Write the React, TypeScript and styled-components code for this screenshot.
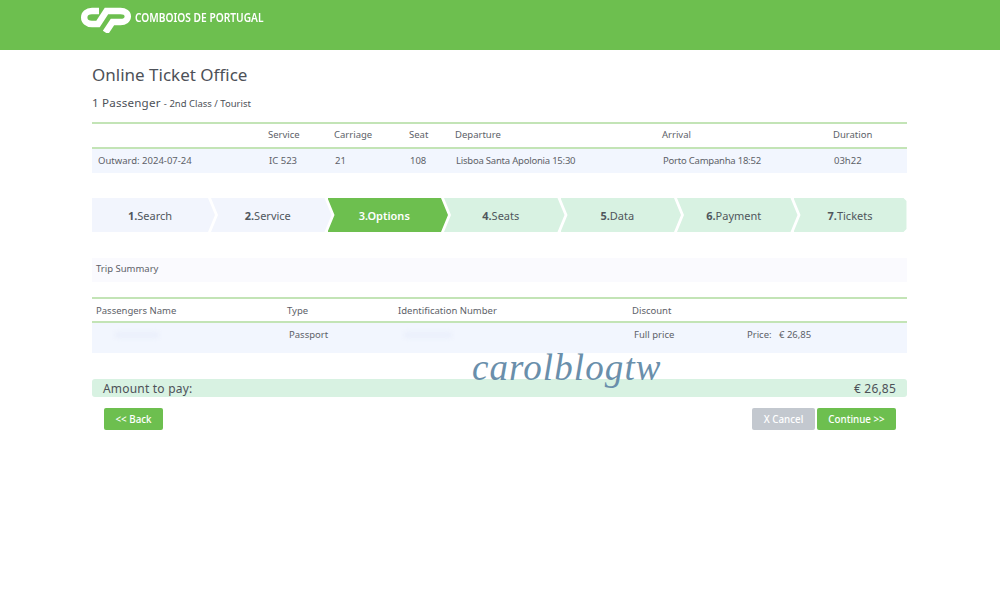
import React from 'react';
import styled, { createGlobalStyle } from 'styled-components';

const GlobalStyle = createGlobalStyle`
  html, body {
    margin: 0;
    padding: 0;
    background: #fff;
  }

  body {
    font-family: "Noto Sans", "Open Sans", sans-serif;
    color: #4d5158;
  }
`;

const Page = styled.div`
  position: relative;
  width: 1000px;
  height: 600px;
  overflow: hidden;
`;

const Header = styled.header`
  height: 50px;
  background: #6dbf4f;
  padding: 6px 0 0 81px;
  box-sizing: border-box;
  display: flex;
  align-items: flex-start;
  gap: 4px;
`;

const BrandName = styled.span`
  margin-top: 3px;
  font-size: 12.5px;
  line-height: 18px;
  font-weight: 600;
  color: #fff;
  transform: scaleX(0.816);
  transform-origin: left center;
  white-space: nowrap;
`;

const Main = styled.main`
  margin: 0 93px 0 92px;
`;

const Title = styled.h1`
  margin: 13px 0 0;
  font-size: 17px;
  line-height: 24px;
  font-weight: 400;
  color: #4d5158;
`;

const Subtitle = styled.div`
  margin-top: 6px;
  height: 20px;
  font-size: 11.6px;
  line-height: 20px;
  letter-spacing: 0.2px;
  color: #4d5158;

  small {
    font-size: 9.5px;
    letter-spacing: 0;
  }
`;

const Grid = styled.div<{ $cols: string }>`
  display: grid;
  grid-template-columns: ${(p) => p.$cols};
  align-items: center;
`;

const HeadRow = styled(Grid)<{ $h: number; $lift?: number }>`
  height: ${(p) => p.$h}px;
  box-sizing: border-box;
  padding-bottom: ${(p) => p.$lift ?? 0}px;
  border-top: 2px solid #c3e4b6;
  border-bottom: 2px solid #c3e4b6;
  font-size: 9.5px;
  color: #5d6168;
`;

const BodyRow = styled(Grid)<{ $h: number; $lift?: number }>`
  height: ${(p) => p.$h}px;
  box-sizing: border-box;
  padding-bottom: ${(p) => p.$lift ?? 0}px;
  background: #f2f6fe;
  font-size: 9.5px;
  color: #5d6168;
`;

const Cell = styled.span<{ $pad?: number; $tight?: boolean }>`
  padding-left: ${(p) => p.$pad ?? 0}px;
  letter-spacing: ${(p) => (p.$tight ? '-0.22px' : '0')};
  white-space: nowrap;
`;

const TopTable = styled.section`
  margin-top: 9px;
`;

const Steps = styled.nav`
  margin-top: 25px;
  display: flex;
  height: 34px;
`;

type StepState = 'done' | 'active' | 'todo';

const stepBg: Record<StepState, string> = {
  done: '#f2f5fd',
  active: '#6dbf4f',
  todo: '#d8f2e2'
};

const firstClip = 'polygon(0 0, calc(100% - 7px) 0, 100% 50%, calc(100% - 7px) 100%, 0 100%)';
const middleClip = 'polygon(0 0, calc(100% - 7px) 0, 100% 50%, calc(100% - 7px) 100%, 0 100%, 7px 50%)';
const lastClip = 'polygon(0 0, calc(100% - 3px) 0, 100% 3px, 100% calc(100% - 3px), calc(100% - 3px) 100%, 0 100%, 7px 50%)';

const stepWidth = (first: boolean, last: boolean) => (first ? 123 : last ? 113 : 120.5);

const Step = styled.div<{ $state: StepState; $first: boolean; $last: boolean }>`
  flex: 0 0 ${(p) => stepWidth(p.$first, p.$last)}px;
  height: 34px;
  box-sizing: border-box;
  padding-right: ${(p) => (p.$last ? 0 : 7)}px;
  margin-right: ${(p) => (p.$last ? 0 : -4)}px;
  display: flex;
  align-items: center;
  justify-content: center;
  font-size: 11px;
  background: ${(p) => stepBg[p.$state]};
  color: ${(p) => (p.$state === 'active' ? '#fff' : '#50565c')};
  font-weight: ${(p) => (p.$state === 'active' ? 600 : 400)};
  clip-path: ${(p) => (p.$first ? firstClip : p.$last ? lastClip : middleClip)};

  b {
    font-weight: ${(p) => (p.$state === 'active' ? 600 : 700)};
  }
`;

const SummaryBar = styled.div`
  margin-top: 26px;
  height: 24px;
  padding: 0 4px;
  background: #fafafe;
  font-size: 9.5px;
  line-height: 22px;
  color: #5d6168;
`;

const PassengerTable = styled.section`
  margin-top: 15px;
`;

const Blurred = styled.span`
  display: block;
  height: 6px;
  border-radius: 3px;
  background: #eaeffb;
  filter: blur(2px);
`;

const BlurCell = styled.span<{ $w: number; $ml: number }>`
  display: block;
  width: ${(p) => p.$w}px;
  margin-left: ${(p) => p.$ml}px;
`;

const AmountBar = styled.div`
  margin-top: 26px;
  height: 18px;
  padding: 0 11px;
  border-radius: 3px;
  background: #d8f2e2;
  display: flex;
  align-items: center;
  justify-content: space-between;
  font-size: 12px;
  letter-spacing: 0.2px;
  color: #4d5158;
`;

const Actions = styled.div`
  margin-top: 11px;
  padding: 0 11px 0 12px;
  display: flex;
  gap: 2px;
`;

const ActionButton = styled.button<{ $variant: 'green' | 'grey' }>`
  height: 22px;
  padding: 0;
  border: 0;
  border-radius: 2px;
  width: ${(p) => (p.$variant === 'grey' ? 63 : 79)}px;
  background: ${(p) => (p.$variant === 'grey' ? '#c3c8cf' : '#6dbf4f')};
  color: #fff;
  font-family: inherit;
  font-size: 9.8px;
  font-weight: 500;
`;

const BackButton = styled(ActionButton)`
  width: 59px;
  margin-right: auto;
`;

const Watermark = styled.span`
  position: absolute;
  left: 472px;
  top: 345px;
  font-family: "Liberation Serif", serif;
  font-style: italic;
  font-size: 37px;
  line-height: 46px;
  letter-spacing: 1.1px;
  color: #6a8fab;
  white-space: nowrap;
`;

const Logo = () => (
  <svg fill="none" height="27" viewBox="0 0 50 27" width="50">
    <path
      d="M18 5 H11 C6 5 3.2 8 3.2 11.5 C3.2 15 6 18 11 18 H17 L25.5 5 H39.5 C44 5 46.8 7.5 46.8 10.5 C46.8 13.5 44 16 39.5 16 H31.5 L24.5 26.5"
      stroke="#fff"
      strokeWidth="6.4"
    />
  </svg>
);

const TOP_COLS = '176px 66px 75px 46px 207px 171px 73px';
const PAX_COLS = '195px 110px 235px 113px 161px';

const stepItems: { n: string; label: string; state: StepState }[] = [
  { n: '1.', label: 'Search', state: 'done' },
  { n: '2.', label: 'Service', state: 'done' },
  { n: '3.', label: 'Options', state: 'active' },
  { n: '4.', label: 'Seats', state: 'todo' },
  { n: '5.', label: 'Data', state: 'todo' },
  { n: '6.', label: 'Payment', state: 'todo' },
  { n: '7.', label: 'Tickets', state: 'todo' }
];

export default function App () {
  return (
    <Page>
      <GlobalStyle />
      <Header>
        <Logo />
        <BrandName>COMBOIOS DE PORTUGAL</BrandName>
      </Header>
      <Main>
        <Title>Online Ticket Office</Title>
        <Subtitle>1 Passenger <small>- 2nd Class / Tourist</small></Subtitle>
        <TopTable>
          <HeadRow $cols={TOP_COLS} $h={27} $lift={2}>
            <Cell />
            <Cell>Service</Cell>
            <Cell>Carriage</Cell>
            <Cell>Seat</Cell>
            <Cell>Departure</Cell>
            <Cell>Arrival</Cell>
            <Cell>Duration</Cell>
          </HeadRow>
          <BodyRow $cols={TOP_COLS} $h={24} $lift={2}>
            <Cell $pad={6}>Outward: 2024-07-24</Cell>
            <Cell $pad={1}>IC 523</Cell>
            <Cell $pad={1}>21</Cell>
            <Cell $pad={1}>108</Cell>
            <Cell $pad={1} $tight>Lisboa Santa Apolonia 15:30</Cell>
            <Cell $pad={1} $tight>Porto Campanha 18:52</Cell>
            <Cell $pad={1}>03h22</Cell>
          </BodyRow>
        </TopTable>
        <Steps>
          {stepItems.map((s, i) => (
            <Step $first={i === 0} $last={i === stepItems.length - 1} $state={s.state} key={s.n}>
              <span><b>{s.n}</b>{s.label}</span>
            </Step>
          ))}
        </Steps>
        <SummaryBar>Trip Summary</SummaryBar>
        <PassengerTable>
          <HeadRow $cols={PAX_COLS} $h={26}>
            <Cell $pad={4}>Passengers Name</Cell>
            <Cell>Type</Cell>
            <Cell $pad={1}>Identification Number</Cell>
            <Cell>Discount</Cell>
            <Cell />
          </HeadRow>
          <BodyRow $cols={PAX_COLS} $h={30} $lift={7}>
            <BlurCell $ml={23} $w={44}><Blurred /></BlurCell>
            <Cell $pad={2}>Passport</Cell>
            <BlurCell $ml={7} $w={48}><Blurred /></BlurCell>
            <Cell $pad={2}>Full price</Cell>
            <Cell $pad={2}>Price:&nbsp;&nbsp; € 26,85</Cell>
          </BodyRow>
        </PassengerTable>
        <AmountBar>
          <span>Amount to pay:</span>
          <span>€ 26,85</span>
        </AmountBar>
        <Actions>
          <BackButton $variant="green">&lt;&lt; Back</BackButton>
          <ActionButton $variant="grey">X Cancel</ActionButton>
          <ActionButton $variant="green">Continue &gt;&gt;</ActionButton>
        </Actions>
      </Main>
      <Watermark>carolblogtw</Watermark>
    </Page>
  );
}
